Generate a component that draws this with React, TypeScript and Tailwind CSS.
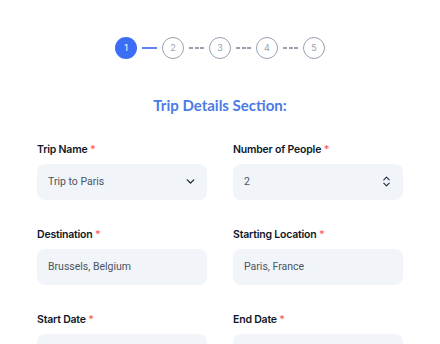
import { ChevronDown, ChevronsUpDown } from "lucide-react";

const STEPS = [1, 2, 3, 4, 5];

function Label({ text }: { text: string }) {
  return (
    <div className="mb-[7px] text-[10.5px] font-semibold leading-[15px] tracking-[-0.2px] text-gray-900">
      {text} <span className="text-red-400">*</span>
    </div>
  );
}

function Field({ label, value, icon }: { label: string; value?: string; icon?: React.ReactNode }) {
  return (
    <div>
      <Label text={label} />
      <div className="flex h-[36px] items-center justify-between rounded-lg bg-[#f1f4f8] pl-[11px] pr-[10px] font-['Roboto',sans-serif] text-[10.5px] text-gray-600">
        <span>{value}</span>
        {icon}
      </div>
    </div>
  );
}

export default function App() {
  return (
    <main className="h-[344px] w-[440px] overflow-hidden bg-white font-['Inter',sans-serif]">
      {/* Stepper */}
      <div className="flex items-center justify-center gap-[5px] pt-[37px]">
        {STEPS.map((n, i) => (
          <div key={n} className="flex items-center gap-[5px]">
            {i > 0 &&
              (i === 1 ? (
                <div className="h-[2px] w-[15px] bg-[#5b86f0]" />
              ) : (
                <div className="flex w-[15px] gap-[1.5px]">
                  <span className="h-[1.5px] w-[4px] bg-gray-400" />
                  <span className="h-[1.5px] w-[4px] bg-gray-400" />
                  <span className="h-[1.5px] w-[4px] bg-gray-400" />
                </div>
              ))}
            <div
              className={
                n === 1
                  ? "flex h-[22px] w-[22px] items-center justify-center rounded-full bg-[#3b6ef5] text-[9px] text-white"
                  : "flex h-[22px] w-[22px] items-center justify-center rounded-full border-[1.5px] border-gray-400 text-[9px] text-gray-400"
              }
            >
              {n}
            </div>
          </div>
        ))}
      </div>

      <h2 className="mt-[35px] text-center font-['Lato',sans-serif] text-[15px] font-bold text-[#4a7be6]">
        Trip Details Section:
      </h2>

      <div className="mt-[25px] grid grid-cols-2 gap-x-[26px] gap-y-[27px] px-[37px]">
        <Field label="Trip Name" value="Trip to Paris" icon={<ChevronDown size={13} strokeWidth={2.5} className="text-gray-800" />} />
        <Field label="Number of People" value="2" icon={<ChevronsUpDown size={13} strokeWidth={2} className="text-gray-800" />} />
        <Field label="Destination" value="Brussels, Belgium" />
        <Field label="Starting Location" value="Paris, France" />
        <Field label="Start Date" />
        <Field label="End Date" />
      </div>
    </main>
  );
}
